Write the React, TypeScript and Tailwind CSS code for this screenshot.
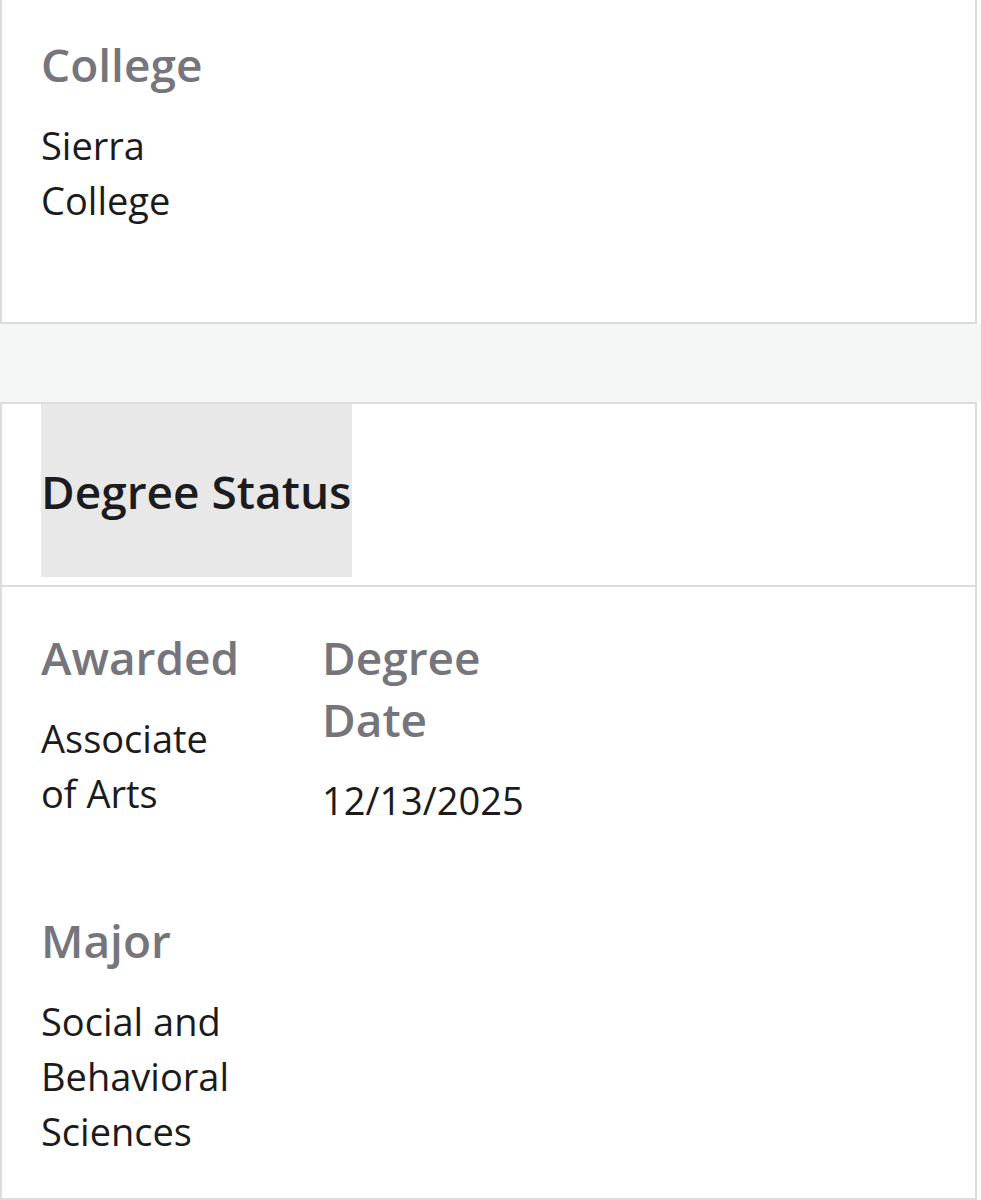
import React from 'react';

interface Field {
  label: string;
  value: string;
}

const FieldBlock: React.FC<{ field: Field }> = ({ field }) => (
  <div className="w-[205px]">
    <p className="text-[46px] leading-[62px] font-semibold text-[#75757b]">{field.label}</p>
    <p className="mt-[23px] text-[38px] leading-[55px] text-[#1b1b1c]">{field.value}</p>
  </div>
);

const App: React.FC = () => {
  const degreeFields: Field[] = [
    { label: 'Awarded', value: 'Associate of Arts' },
    { label: 'Degree Date', value: '12/13/2025' },
    { label: 'Major', value: 'Social and Behavioral Sciences' },
  ];

  return (
    <div className="w-[981px] min-h-[1200px] bg-white font-['Open_Sans',sans-serif]">
      {/* college card, top edge is cut off */}
      <div className="w-[977px] border-x-2 border-b-2 border-[#dcdcdc] bg-white pt-[33px] pb-[94px] px-[39px]">
        <FieldBlock field={{ label: 'College', value: 'Sierra College' }} />
      </div>

      <div className="h-[78px] bg-[#f5f6f6]" />

      {/* degree status card */}
      <div className="w-[977px] border-2 border-[#dcdcdc] bg-white">
        <div className="px-[39px] pb-[8px]">
          <div className="inline-flex h-[173px] items-center bg-[#e8e8e8]">
            <h2 className="text-[46px] leading-[62px] font-semibold text-[#1c1c1e]">Degree Status</h2>
          </div>
        </div>
        <div className="border-t-2 border-[#dcdcdc] px-[39px] pt-[39px] pb-[39px]">
          <div className="grid grid-cols-[205px_205px] gap-x-[76px] gap-y-[81px]">
            {degreeFields.map((f) => (
              <FieldBlock key={f.label} field={f} />
            ))}
          </div>
        </div>
      </div>
    </div>
  );
};

export default App;
